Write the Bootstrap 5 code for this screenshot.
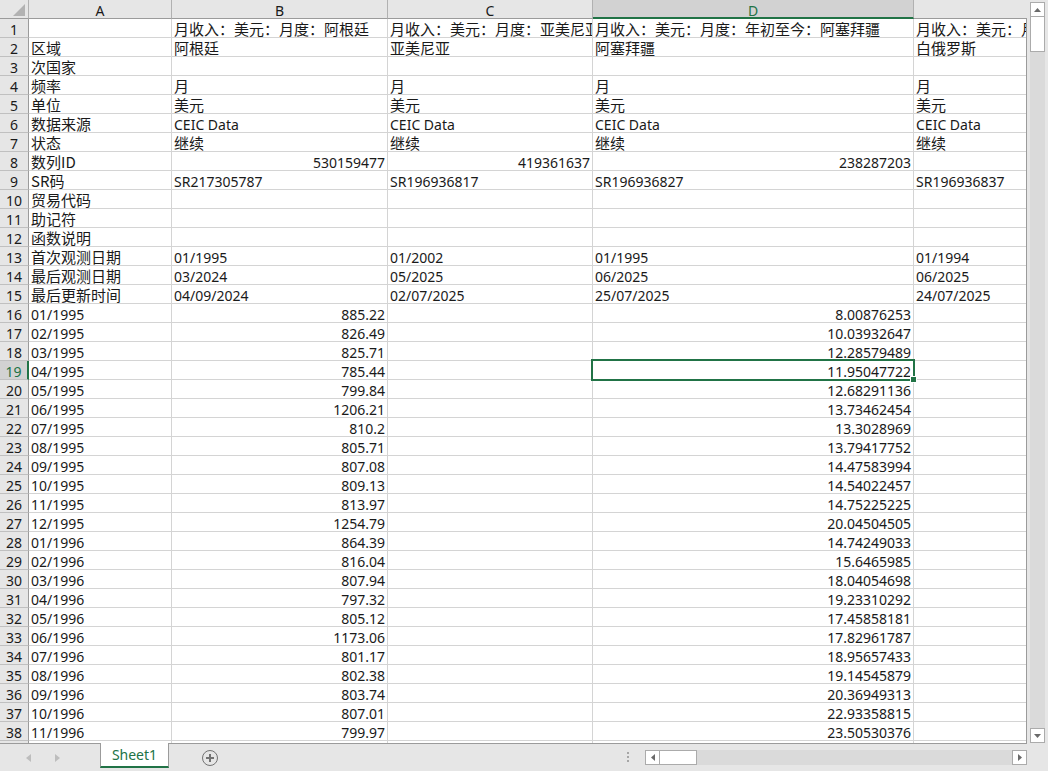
<!DOCTYPE html>
<html lang="zh-CN">
<head>
<meta charset="utf-8">
<meta name="viewport" content="width=device-width, initial-scale=1">
<title>Sheet1</title>
<link href="https://cdn.jsdelivr.net/npm/bootstrap@5.3.0/dist/css/bootstrap.min.css" rel="stylesheet">
<style>
:root { --chrome: #e6e6e6; --picked: #d2d2d2; --line: #d4d4d4; --edge: #9b9b9b; --green: #217346; }
body { background: var(--chrome); font: 400 14px/14px "Noto Sans", "Noto Sans CJK SC", sans-serif; color: #1a1a1a; }
.pane { min-height: 0; }
.pane-grid { min-width: 0; background: linear-gradient(var(--chrome) 18px, #fff 18px); position: relative; }
.pane-grid::after { content: ""; position: absolute; top: 18px; right: 0; bottom: 0; width: 1px; background: var(--edge); }
.sheet { table-layout: fixed; width: 100%; border-collapse: separate; border-spacing: 0; }
.sheet th, .sheet td { height: 19px; padding: 4px 2px 0; white-space: nowrap; overflow-x: clip; overflow-y: visible; }
.sheet td { border-right: 1px solid var(--line); border-bottom: 1px solid var(--line); }
.sheet td:last-child { border-right: 0; }
.sheet th { font-weight: 400; text-align: center; background: var(--chrome); }
.sheet thead th { border-right: 1px solid #b1b1b1; border-bottom: 1px solid var(--edge); }
.sheet thead th:first-child { padding: 0; }
.sheet thead th:last-child { border-right: 0; }
.sheet tbody th { border-right: 1px solid var(--edge); border-bottom: 1px solid #c0c0c0; padding: 4px 0 0; }
.sheet .han { font-family: "Noto Sans CJK SC", sans-serif; font-size: 15px; line-height: 16px; padding-top: 2px; }
.sheet .active-col, .sheet .active-row { background: var(--picked); color: var(--green); }
.sheet thead .active-col { border-bottom: 2px solid var(--green); line-height: 13px; }
.sheet tbody .active-row { border-right: 2px solid var(--green); }
.sheet td.selected { position: relative; overflow: visible; }
.selected::before { content: ""; position: absolute; inset: -2px; border: 2px solid var(--green); }
.selected::after { content: ""; position: absolute; right: -4px; bottom: -4px; width: 7px; height: 7px; background: var(--green); border: 1px solid #fff; }
.corner { display: block; margin: 3px 3px 2px auto; }
.vbar { width: 21px; padding: 2px 3px 0; }
.vtrack, .htrack { background: #dadada; }
.sq { width: 15px; height: 15px; padding: 0; border: 1px solid #ababab; background: #fff; display: flex; align-items: center; justify-content: center; flex: none; }
.vthumb { height: 36px; border: 1px solid #ababab; background: #fff; margin-top: -1px; }
.hthumb { width: 38px; border: 1px solid #ababab; background: #fff; margin-left: -1px; }
.foot { height: 28px; }
.foot-line { border-top: 1px solid var(--edge); }
.plain { border: 0; background: none; padding: 0; display: flex; align-items: center; justify-content: center; }
.tabs-nav { width: 100px; padding-right: 14px; }
.tab-live { width: 69px; height: 25px; background: #fff; color: var(--green); border: solid var(--edge); border-width: 0 1px; border-bottom: 2px solid var(--green); line-height: 22px; padding: 0; }
.hbar { width: 382px; height: 15px; }
</style>
</head>
<body class="vh-100 overflow-hidden d-flex flex-column">
<main class="pane d-flex flex-grow-1">
  <div class="pane-grid flex-grow-1 overflow-hidden">
    <table class="sheet">
      <colgroup><col style="width:29px"><col style="width:143px"><col style="width:216px"><col style="width:205px"><col style="width:321px"><col></colgroup>
      <thead><tr>
        <th aria-label="全选"><svg class="corner" width="12" height="12"><path d="M12 0V12H0Z" fill="#b2b2b2"/></svg></th>
        <th>A</th><th>B</th><th>C</th><th class="active-col">D</th><th></th>
      </tr></thead>
      <tbody id="rows"></tbody>
    </table>
  </div>
  <div class="vbar d-flex flex-column flex-shrink-0">
    <button class="sq" aria-label="向上滚动"><svg width="7" height="4"><path d="M0 4L3.5 0L7 4Z" fill="#6a6a6a"/></svg></button>
    <div class="vtrack flex-grow-1"><div class="vthumb"></div></div>
    <button class="sq" aria-label="向下滚动"><svg width="7" height="4"><path d="M0 0L3.5 4L7 0Z" fill="#6a6a6a"/></svg></button>
  </div>
</main>
<footer class="foot d-flex flex-shrink-0">
  <div class="foot-line tabs-nav d-flex justify-content-center gap-4">
    <button class="plain" aria-label="上一张"><svg width="5" height="8"><path d="M5 0V8L0 4Z" fill="#bdbdbd"/></svg></button>
    <button class="plain" aria-label="下一张"><svg width="5" height="8"><path d="M0 0V8L5 4Z" fill="#bdbdbd"/></svg></button>
  </div>
  <button class="tab-live">Sheet1</button>
  <div class="foot-line flex-grow-1 d-flex align-items-center ps-4">
    <button class="plain ms-2" aria-label="新工作表"><svg width="18" height="18" fill="none" stroke="#737373"><circle cx="9" cy="9" r="7.5"/><path d="M9 5V13M5 9H13" stroke-width="2"/></svg></button>
    <svg class="ms-auto me-3" width="2" height="11" fill="#a6a6a6"><path d="M0 0h2v2H0zM0 4h2v2H0zM0 8h2v2H0z"/></svg>
    <div class="hbar d-flex">
      <button class="sq" aria-label="向左滚动"><svg width="4" height="7"><path d="M4 0V7L0 3.5Z" fill="#6a6a6a"/></svg></button>
      <div class="htrack flex-grow-1 d-flex"><div class="hthumb"></div></div>
      <button class="sq" aria-label="向右滚动"><svg width="4" height="7"><path d="M0 0V7L4 3.5Z" fill="#6a6a6a"/></svg></button>
    </div>
  </div>
  <div class="vbar"></div>
</footer>
<script>
const rows = [
  ["", "月收入：美元：月度：阿根廷", "月收入：美元：月度：亚美尼亚", "月收入：美元：月度：年初至今：阿塞拜疆", "月收入：美元：月度：白俄罗斯"],
  ["区域", "阿根廷", "亚美尼亚", "阿塞拜疆", "白俄罗斯"],
  ["次国家", "", "", "", ""],
  ["频率", "月", "月", "月", "月"],
  ["单位", "美元", "美元", "美元", "美元"],
  ["数据来源", "CEIC Data", "CEIC Data", "CEIC Data", "CEIC Data"],
  ["状态", "继续", "继续", "继续", "继续"],
  ["数列ID", 530159477, 419361637, 238287203, ""],
  ["SR码", "SR217305787", "SR196936817", "SR196936827", "SR196936837"],
  ["贸易代码", "", "", "", ""],
  ["助记符", "", "", "", ""],
  ["函数说明", "", "", "", ""],
  ["首次观测日期", "01/1995", "01/2002", "01/1995", "01/1994"],
  ["最后观测日期", "03/2024", "05/2025", "06/2025", "06/2025"],
  ["最后更新时间", "04/09/2024", "02/07/2025", "25/07/2025", "24/07/2025"]
];
const argentina = [885.22, 826.49, 825.71, 785.44, 799.84, 1206.21, 810.2, 805.71, 807.08, 809.13, 813.97, 1254.79, 864.39, 816.04, 807.94, 797.32, 805.12, 1173.06, 801.17, 802.38, 803.74, 807.01, 799.97];
const azerbaijan = [8.00876253, 10.03932647, 12.28579489, 11.95047722, 12.68291136, 13.73462454, 13.3028969, 13.79417752, 14.47583994, 14.54022457, 14.75225225, 20.04504505, 14.74249033, 15.6465985, 18.04054698, 19.23310292, 17.45858181, 17.82961787, 18.95657433, 19.14545879, 20.36949313, 22.93358815, 23.50530376];
argentina.forEach((v, i) => {
  const month = String(i % 12 + 1).padStart(2, "0");
  rows.push([month + "/" + (1995 + Math.floor(i / 12)), v, "", azerbaijan[i], ""]);
});
rows.push(["", "", "", "", ""]);
const body = document.getElementById("rows");
rows.forEach((cells, r) => {
  const tr = body.insertRow();
  const th = document.createElement("th");
  th.textContent = r < 38 ? r + 1 : "";
  if (r === 18) th.className = "active-row";
  tr.append(th);
  cells.forEach((v, c) => {
    const td = tr.insertCell();
    td.textContent = v;
    if (typeof v === "number") td.classList.add("text-end");
    if (/[\u4e00-\u9fff]/.test(v)) td.classList.add("han");
    if (r === 18 && c === 3) td.classList.add("selected");
  });
});
</script>
<script src="https://cdn.jsdelivr.net/npm/bootstrap@5.3.0/dist/js/bootstrap.bundle.min.js"></script>
</body>
</html>
